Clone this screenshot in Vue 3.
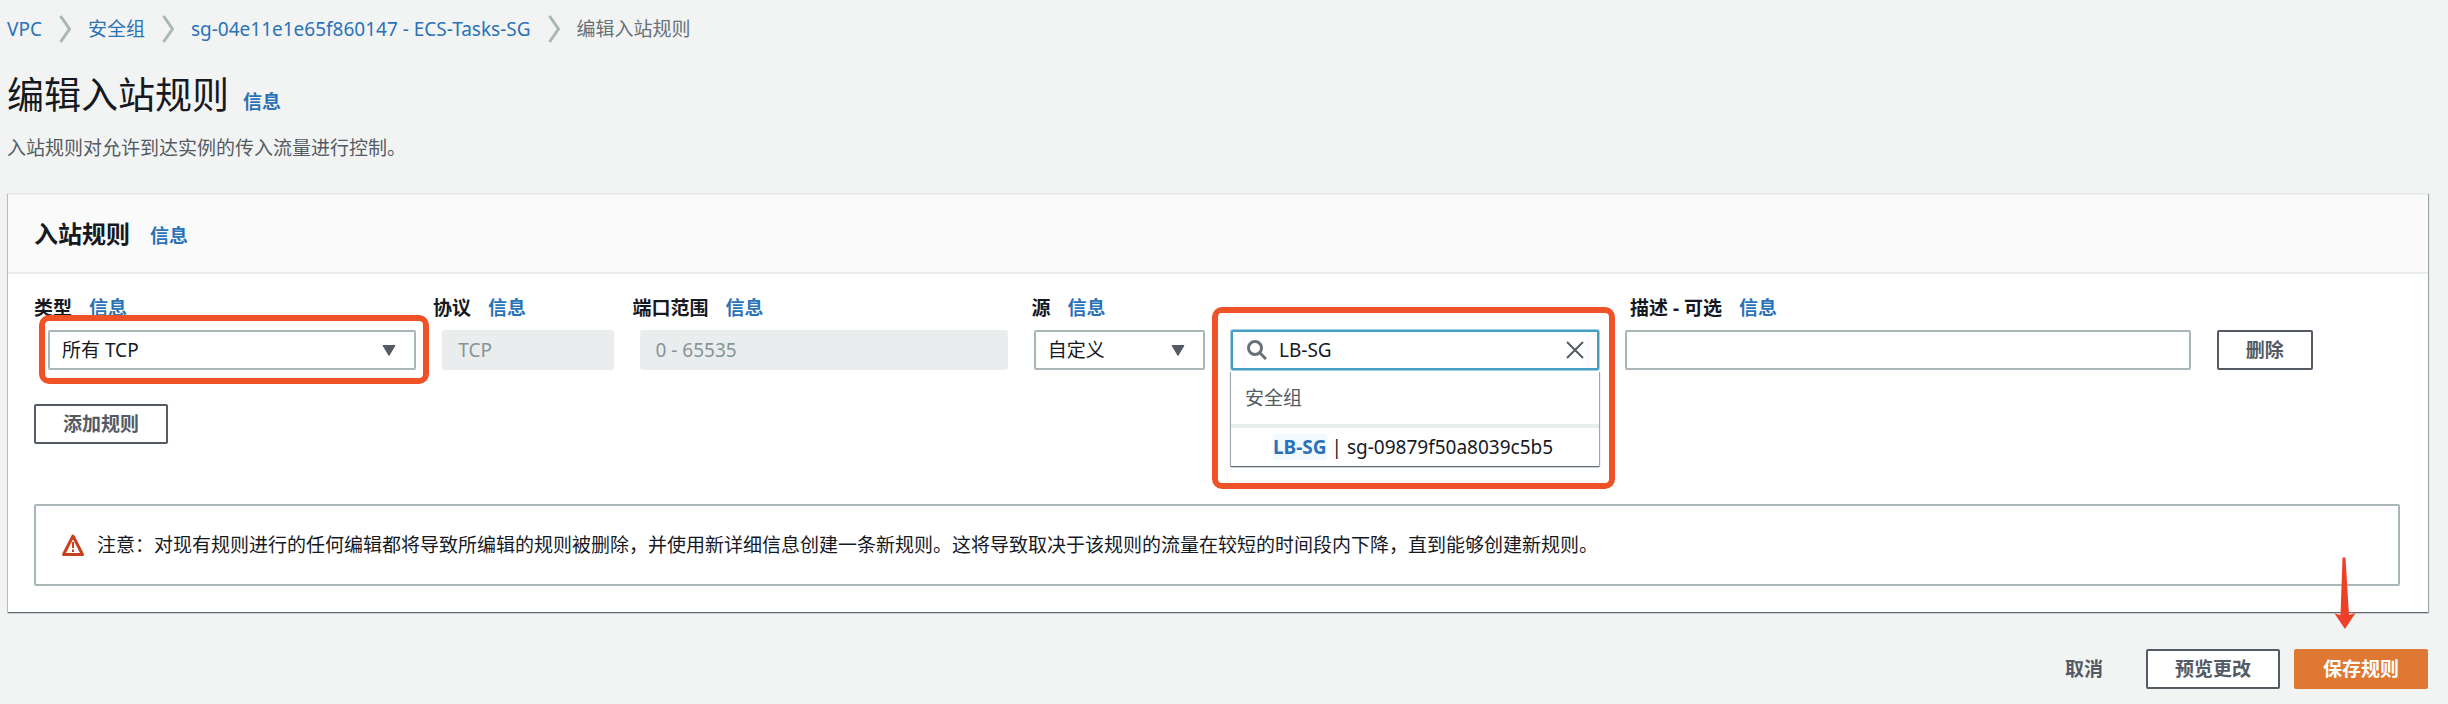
<script setup>
import { ref } from 'vue'

const crumbs = ['VPC', '安全组', 'sg-04e11e1e65f860147 - ECS-Tasks-SG']
const columns = [
  { text: '类型', target: 'type', span: 'two' },
  { text: '协议', target: 'protocol', span: 'one' },
  { text: '端口范围', target: 'ports', span: 'two' },
  { text: '源', target: 'source', span: 'three' },
  { text: '描述 - 可选', target: 'description', span: 'three' }
]
const query = ref('LB-SG')
const description = ref('')
</script>

<template>
  <div class="page">
    <nav class="crumbs" aria-label="breadcrumb">
      <template v-for="crumb in crumbs" :key="crumb">
        <a href="#">{{ crumb }}</a>
        <svg class="chevron" viewBox="0 0 12 28" aria-hidden="true"><path d="M1.500 1 10.500 14 1.500 27" /></svg>
      </template>
      <span>编辑入站规则</span>
    </nav>

    <header class="title">
      <h1>编辑入站规则</h1>
      <a class="info" href="#">信息</a>
    </header>
    <p class="lead">入站规则对允许到达实例的传入流量进行控制。</p>

    <section class="card">
      <header class="card-head">
        <h2>入站规则</h2>
        <a class="info" href="#">信息</a>
      </header>

      <div class="card-body">
        <div class="grid labels">
          <div v-for="col in columns" :key="col.target" :class="['label', col.span]">
            <label :for="col.target">{{ col.text }}</label>
            <a class="info" href="#">信息</a>
          </div>
        </div>

        <div class="grid controls">
          <div class="two select marked">
            <select id="type"><option>所有 TCP</option></select>
            <svg class="caret" viewBox="0 0 14 11" aria-hidden="true"><path d="M1 .5h12L7 10.5z" /></svg>
          </div>
          <input id="protocol" class="one" value="TCP" disabled>
          <input id="ports" class="two" value="0 - 65535" disabled>
          <div class="one select">
            <select id="source"><option>自定义</option></select>
            <svg class="caret" viewBox="0 0 14 11" aria-hidden="true"><path d="M1 .5h12L7 10.5z" /></svg>
          </div>
          <div class="two search marked tall">
            <svg class="glass" viewBox="0 0 20 20" aria-hidden="true">
              <circle cx="8" cy="8" r="6.5" /><path d="m12.5 12.5 6.500 6.500" />
            </svg>
            <input v-model="query" aria-label="搜索源">
            <button class="clear" type="button" aria-label="清除">
              <svg viewBox="0 0 18 18" aria-hidden="true"><path d="m1 1 16 16M17 1 1 17" /></svg>
            </button>
            <div class="menu" role="listbox">
              <div class="group">安全组</div>
              <div class="option" role="option"><mark>LB-SG</mark> | sg-09879f50a8039c5b5</div>
            </div>
          </div>
          <input id="description" v-model="description" class="three">
          <button class="btn delete" type="button">删除</button>
        </div>

        <button class="btn add" type="button">添加规则</button>

        <div class="notice">
          <svg class="warn" viewBox="0 0 22 22" aria-hidden="true">
            <path d="M11 2 20.500 20.500H1.500z" />
            <path class="bang" d="M11 8v6M11 15.500v2.500" />
          </svg>
          <p>注意：对现有规则进行的任何编辑都将导致所编辑的规则被删除，并使用新详细信息创建一条新规则。这将导致取决于该规则的流量在较短的时间段内下降，直到能够创建新规则。</p>
        </div>
      </div>
    </section>

    <footer class="actions">
      <button class="btn plain" type="button">取消</button>
      <button class="btn" type="button">预览更改</button>
      <div class="save">
        <button class="btn primary" type="button">保存规则</button>
        <svg class="arrow" viewBox="0 0 22 72" aria-hidden="true">
          <path d="M8.500 1Q10 -.5 11.500 1L15 58 21.500 56 11 72 .5 56.500 6.500 58z" />
        </svg>
      </div>
    </footer>
  </div>
</template>

<style>
body {
  margin: 0;
  background: #f2f4f3;
}
</style>

<style scoped>
* {
  box-sizing: border-box;
}

.page {
  padding: 16px 20px 14px 7px;
  color: #16191f;
  font: 19px/26px "Noto Sans", "Noto Sans CJK SC", sans-serif;
}

h1, h2, p {
  margin: 0;
}

a {
  color: #2a72b8;
  text-decoration: none;
}

input, select, button {
  font: inherit;
  color: inherit;
}

.crumbs {
  display: flex;
  align-items: center;
  gap: 17px;
  height: 26px;
  color: #687078;
}

.chevron {
  width: 12px;
  height: 28px;
  fill: none;
  stroke: #aab7b8;
  stroke-width: 3;
}

.title {
  display: flex;
  align-items: baseline;
  gap: 14px;
  margin-top: 26px;
}

h1 {
  font-size: 37px;
  font-weight: 400;
  line-height: 54px;
}

.info {
  font-weight: 700;
}

.lead {
  margin-top: 13px;
  color: #545b64;
}

.card {
  margin-top: 32px;
  margin-left: 1px;
  background: #fff;
  border-top: 2px solid #eaeded;
  box-shadow: 0 1px 1px 0 #5f6b72, 1px 1px 1px 0 #aab2b5, -1px 1px 1px 0 #c8cfd1;
}

.card-head {
  display: flex;
  align-items: baseline;
  gap: 20px;
  padding: 21px 26px 20px;
  background: #fafafa;
  border-bottom: 2px solid #eaeded;
}

h2 {
  font-size: 24px;
  font-weight: 700;
  line-height: 36px;
}

.card-body {
  padding: 21px 28px 26px 26px;
}

.grid {
  display: grid;
  grid-template-columns: repeat(12, minmax(0, 1fr));
}

.labels {
  column-gap: 28px;
  font-weight: 700;
}

.label {
  display: flex;
  gap: 17px;
  white-space: nowrap;
}

.two {
  grid-column: span 2;
}

.three {
  grid-column: span 3;
}

.controls {
  column-gap: 26px;
  margin-top: 9px;
  padding: 0 12px 0 14px;
}

.select, .search {
  position: relative;
}

input, select {
  display: block;
  width: 100%;
  height: 40px;
  padding: 0 14px;
  background: #fff;
  border: 2px solid #aab7b8;
  border-radius: 2px;
  outline: none;
  appearance: none;
}

select {
  padding: 0 12px;
}

input:disabled {
  background: #eaeded;
  border-color: #eaeded;
  border-radius: 3px;
  color: #879596;
}

.caret {
  position: absolute;
  top: 15px;
  right: 20px;
  width: 14px;
  height: 11px;
  fill: #545b64;
  stroke: #545b64;
  stroke-linejoin: round;
  pointer-events: none;
}

.marked::after {
  content: "";
  position: absolute;
  z-index: 3;
  inset: -15px -13px -14px -9px;
  border: 6px solid #f05228;
  border-radius: 10px;
  pointer-events: none;
}

.tall::after {
  inset: -23px -16px -119px -19px;
}

.search input {
  padding: 0 50px 0 46px;
  border-color: #449dc5;
  box-shadow: 0 0 0 1px #a4cfe2;
}

.glass {
  position: absolute;
  top: 10px;
  left: 16px;
  width: 20px;
  height: 20px;
  fill: none;
  stroke: #687078;
  stroke-width: 3;
}

.clear {
  position: absolute;
  top: 2px;
  right: 6px;
  display: grid;
  place-items: center;
  width: 36px;
  height: 36px;
  padding: 0;
  background: none;
  border: 0;
}

.clear svg {
  width: 18px;
  height: 18px;
  stroke: #545b64;
  stroke-width: 2;
}

.menu {
  position: absolute;
  z-index: 2;
  top: 41px;
  left: 0;
  right: 0;
  background: #fff;
  box-shadow: 0 1px 1px 0 #5f6b72, 1px 1px 1px 0 #aab2b5, -1px 1px 1px 0 #aab2b5;
}

.group {
  padding: 14px 14px 13px;
  border-bottom: 4px solid #eaeded;
  color: #545b64;
}

.group, .option {
  white-space: nowrap;
}

.option {
  padding: 6px 42px;
}

mark {
  background: #f1faff;
  color: #2a72b8;
  font-weight: 700;
}

.btn {
  height: 40px;
  padding: 0 27px;
  background: #fff;
  border: 2px solid #545b64;
  border-radius: 2px;
  color: #545b64;
  font-weight: 700;
  white-space: nowrap;
}

.delete {
  justify-self: start;
}

.add {
  display: block;
  margin-top: 34px;
}

.notice {
  display: flex;
  align-items: center;
  gap: 13px;
  margin-top: 60px;
  padding: 26px;
  border: 2px solid #aab7b8;
  border-radius: 2px;
}

.warn {
  flex: none;
  width: 22px;
  height: 22px;
  fill: none;
  stroke: #c7401f;
  stroke-width: 3;
  stroke-linejoin: round;
}

.bang {
  stroke-width: 2;
}

.actions {
  display: flex;
  justify-content: flex-end;
  gap: 14px;
  margin-top: 37px;
}

.plain {
  background: none;
  border-color: transparent;
}

.save {
  position: relative;
}

.primary {
  background: #df7833;
  border-color: #df7833;
  color: #fff;
}

.arrow {
  position: absolute;
  right: 72px;
  bottom: 60px;
  width: 22px;
  height: 72px;
  fill: #ee4027;
}
</style>
